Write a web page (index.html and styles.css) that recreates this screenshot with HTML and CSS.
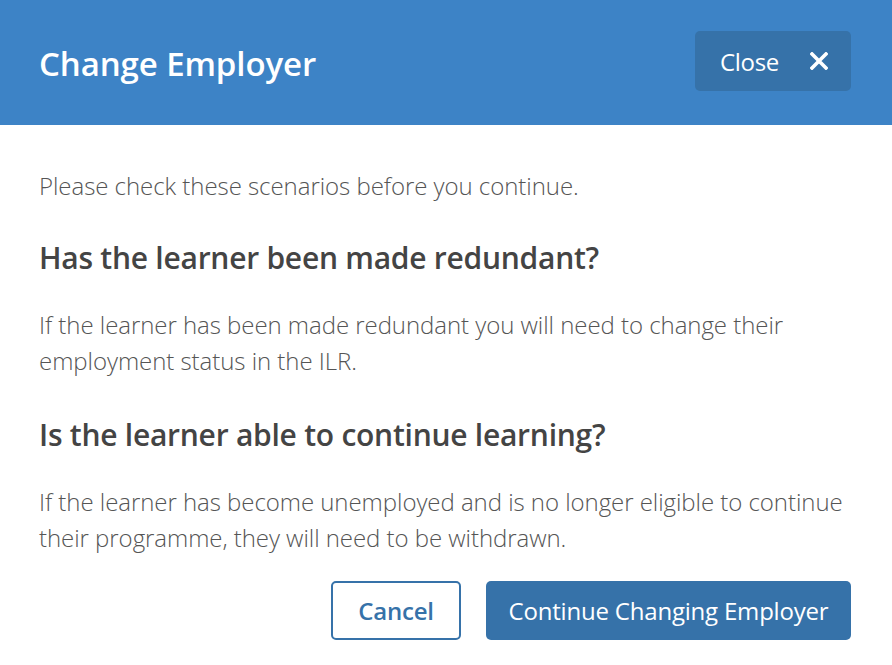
FILE: index.html
```html
<!DOCTYPE html>
<html>
<head>
  <link rel="stylesheet" href="styles.css">
</head>
<body>
  <div class="modal">
    <div class="modal-header">
      <h1>Change Employer</h1>
      <button class="close-btn">Close
        <svg class="close-x" width="18" height="18" viewBox="0 0 18 18">
          <path d="M2 2 L16 16 M16 2 L2 16" stroke="#ffffff" stroke-width="3.6" stroke-linecap="square"/>
        </svg>
      </button>
    </div>

    <div class="modal-body">
      <p class="intro">Please check these scenarios before you continue.</p>

      <h2>Has the learner been made redundant?</h2>
      <p>If the learner has been made redundant you will need to change their employment status in the ILR.</p>

      <h2>Is the learner able to continue learning?</h2>
      <p class="last">If the learner has become unemployed and is no longer eligible to continue their programme, they will need to be withdrawn.</p>

      <div class="actions">
        <button class="btn btn-outline">Cancel</button>
        <button class="btn btn-primary">Continue Changing Employer</button>
      </div>
    </div>
  </div>
</body>
</html>
```

FILE: styles.css
```css
body {
  margin: 0;
  background-color: #ffffff;
  font-family: "Open Sans", sans-serif;
  color: #555555;
}

.modal {
  width: 892px;
}

.modal-header {
  display: flex;
  justify-content: space-between;
  align-items: center;
  height: 125px;
  padding: 0 41px 0 39px;
  box-sizing: border-box;
  background-color: #3d83c6;
}

.modal-header h1 {
  margin: 3px 0 0 0;
  font-size: 33px;
  font-weight: 600;
  color: #ffffff;
  line-height: 40px;
  letter-spacing: -0.1px;
}

.close-btn {
  display: flex;
  align-items: center;
  gap: 31px;
  width: 156px;
  height: 60px;
  margin-top: -3px;
  padding: 0 0 0 25px;
  border: none;
  border-radius: 5px;
  background-color: #3672a9;
  color: #ffffff;
  font-family: "Open Sans", sans-serif;
  font-size: 24px;
  letter-spacing: -0.3px;
  cursor: pointer;
}

.close-x {
  display: block;
}

.modal-body {
  padding: 43px 41px 0 39px;
}

.modal-body p {
  margin: 0 0 38px 0;
  font-size: 24px;
  font-weight: 300;
  line-height: 36px;
  letter-spacing: -0.05px;
}

.modal-body .intro {
  line-height: 35px;
  margin-bottom: 37px;
}

.modal-body .last {
  margin-bottom: 25px;
}

.modal-body h2 {
  margin: 0 0 31px 0;
  font-size: 30px;
  font-weight: 600;
  line-height: 36px;
  color: #444444;
  letter-spacing: -0.25px;
}

.actions {
  display: flex;
  justify-content: flex-end;
  gap: 25px;
}

.btn {
  height: 59px;
  border-radius: 5px;
  font-family: "Open Sans", sans-serif;
  font-size: 24px;
  letter-spacing: -0.2px;
  cursor: pointer;
}

.btn-outline {
  width: 130px;
  border: 2px solid #3672a9;
  background-color: #ffffff;
  color: #3672a9;
  font-weight: 600;
}

.btn-primary {
  width: 365px;
  border: none;
  background-color: #3672a9;
  color: #ffffff;
}
```
